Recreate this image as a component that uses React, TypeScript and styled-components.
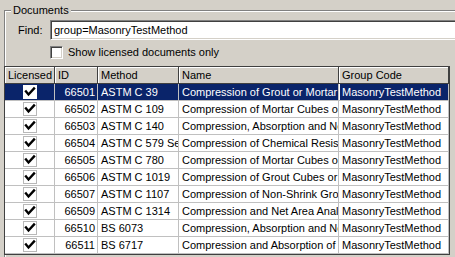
import React from "react";
import styled, { createGlobalStyle } from "styled-components";

const Global = createGlobalStyle`
  html, body {
    margin: 0;
    padding: 0;
    background: #d4d0c8;
    overflow: hidden;
    font-family: "Liberation Sans", Arial, sans-serif;
    font-size: 11px;
    color: #000;
  }
`;

const Page = styled.div`
  width: 455px;
  height: 257px;
  padding-top: 10px;
  box-sizing: border-box;
  overflow: hidden;
`;

const Frame = styled.section`
  margin-left: 4px;
  width: 500px;
  border: 1px solid #808080;
  box-shadow: inset 1px 1px 0 #fff, 1px 1px 0 #fff;
  padding-bottom: 10px;
`;

const Legend = styled.div`
  width: fit-content;
  margin: -7px 0 0 6px;
  padding: 0 2px;
  background: #d4d0c8;
  line-height: 13px;
`;

const FindRow = styled.div`
  display: flex;
  align-items: center;
  margin-top: 3px;
  padding-left: 13px;
  padding-right: 10px;
`;

const FindLabel = styled.span`
  width: 32px;
  line-height: 16px;
`;

const TextBox = styled.div`
  flex: 1;
  height: 20px;
  box-sizing: border-box;
  border: 1px solid;
  border-color: #808080 #fff #fff #808080;
  box-shadow: inset 1px 1px 0 #404040, inset -1px -1px 0 #d4d0c8;
  background: #fff;
  padding: 1px 0 0 3px;
  line-height: 16px;
  white-space: nowrap;
`;

const CheckRow = styled.label`
  display: flex;
  align-items: center;
  margin-top: 6px;
  padding-left: 45px;
  height: 13px;
`;

const Box = styled.span`
  width: 13px;
  height: 13px;
  box-sizing: border-box;
  border: 1px solid;
  border-color: #808080 #fff #fff #808080;
  box-shadow: inset 1px 1px 0 #404040, inset -1px -1px 0 #d4d0c8;
  background: #fff;
`;

const CheckText = styled.span`
  margin-left: 5px;
  line-height: 13px;
`;

const Grid = styled.div`
  margin: 7px 0 0 -1px;
  width: 446px;
  box-sizing: border-box;
  border: 1px solid #404040;
  background: #fff;
`;

const Row = styled.div<{ $selected?: boolean }>`
  display: grid;
  grid-template-columns: 50px 43px 81px 160px 110px;
  background: ${(p) => (p.$selected ? "#0a246a" : "#fff")};
  color: ${(p) => (p.$selected ? "#fff" : "#000")};
`;

const HeadCell = styled.div`
  height: 17px;
  box-sizing: border-box;
  background: #d4d0c8;
  border-right: 1px solid #404040;
  border-bottom: 1px solid #404040;
  box-shadow: inset 1px 1px 0 #fff;
  padding: 0 0 0 3px;
  line-height: 16px;
  white-space: nowrap;
  overflow: hidden;
`;

const Cell = styled.div<{ $align?: "left" | "right" | "center"; $focus?: boolean }>`
  height: 17px;
  box-sizing: border-box;
  border-right: 1px solid #c0c0c0;
  border-bottom: 1px solid #c0c0c0;
  padding: 0 2px 0 3px;
  line-height: 16px;
  white-space: nowrap;
  overflow: hidden;
  text-align: ${(p) => p.$align || "left"};
  display: ${(p) => (p.$align === "center" ? "flex" : "block")};
  justify-content: center;
  align-items: center;
  ${(p) => (p.$focus ? "box-shadow: inset 1px 0 0 #fff;" : "")}
`;

const CheckCell = styled.span<{ $selected?: boolean }>`
  width: 14px;
  height: 14px;
  box-sizing: border-box;
  border: 1px solid ${(p) => (p.$selected ? "#fff" : "#b8b8b8")};
  background: #fff;
  display: flex;
  align-items: center;
  justify-content: center;
`;

const Check = () => (
  <svg width="12" height="12" viewBox="0 0 12 12">
    <path d="M2 5.5 L4.5 8.5 L10 2.5" fill="none" stroke="#000" strokeWidth="2.4" strokeLinecap="square" />
  </svg>
);

const rows = [
  ["66501", "ASTM C 39", "Compression of Grout or Mortar Prisms"],
  ["66502", "ASTM C 109", "Compression of Mortar Cubes or Cylinders"],
  ["66503", "ASTM C 140", "Compression, Absorption and Net Area of Units"],
  ["66504", "ASTM C 579 Series", "Compression of Chemical Resistant Mortars"],
  ["66505", "ASTM C 780", "Compression of Mortar Cubes or Cylinders"],
  ["66506", "ASTM C 1019", "Compression of Grout Cubes or Prisms"],
  ["66507", "ASTM C 1107", "Compression of Non-Shrink Grout Cubes"],
  ["66509", "ASTM C 1314", "Compression and Net Area Analysis of Prisms"],
  ["66510", "BS 6073", "Compression, Absorption and Net Area of Blocks"],
  ["66511", "BS 6717", "Compression and Absorption of Paving Blocks"],
];

export default function App() {
  return (
    <Page>
      <Global />
      <Frame>
        <Legend>Documents</Legend>
        <FindRow>
          <FindLabel>Find:</FindLabel>
          <TextBox>group=MasonryTestMethod</TextBox>
        </FindRow>
        <CheckRow>
          <Box />
          <CheckText>Show licensed documents only</CheckText>
        </CheckRow>
        <Grid>
          <Row>
            <HeadCell>Licensed</HeadCell>
            <HeadCell>ID</HeadCell>
            <HeadCell>Method</HeadCell>
            <HeadCell>Name</HeadCell>
            <HeadCell>Group Code</HeadCell>
          </Row>
          {rows.map(([id, method, name], i) => (
            <Row key={id} $selected={i === 0}>
              <Cell $align="center">
                <CheckCell $selected={i === 0}>
                  <Check />
                </CheckCell>
              </Cell>
              <Cell $align="right">{id}</Cell>
              <Cell>{method}</Cell>
              <Cell>{name}</Cell>
              <Cell $focus={i === 0}>MasonryTestMethod</Cell>
            </Row>
          ))}
        </Grid>
      </Frame>
    </Page>
  );
}
